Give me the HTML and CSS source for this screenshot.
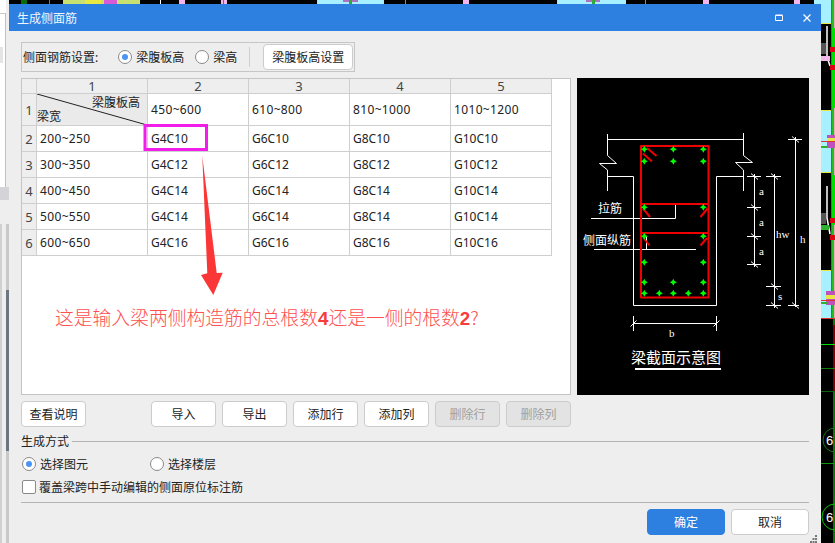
FILE: index.html
```html
<!DOCTYPE html>
<html lang="zh-CN">
<head>
<meta charset="utf-8">
<title>生成侧面筋</title>
<link rel="stylesheet" href="styles.css">
</head>
<body>
<svg class="cad-bg" viewBox="0 0 835 543" aria-hidden="true">
  <rect x="9" width="826" height="543" fill="#000"/>
  <rect x="63" width="77" height="4" fill="#c8e070"/>
  <rect x="85" width="16" height="4" fill="#e8e840"/>
  <rect x="104" width="13" height="4" fill="#d85ad8"/>
  <rect x="21" width="6" height="4" fill="#0a6a0a"/>
  <rect x="49" width="1" height="4" fill="#0c0"/>
  <rect x="160" width="1" height="4" fill="#fff"/>
  <rect x="179" width="6" height="4" fill="#f6b4ee"/>
  <rect x="221" width="6" height="4" fill="#f6b4ee"/>
  <rect x="223" width="1" height="4" fill="#c44"/>
  <rect x="318" width="66" height="4" fill="#a6f0ff"/>
  <rect x="317" width="1" height="4" fill="#e8e840"/>
  <rect x="383" width="1" height="4" fill="#e8e840"/>
  <rect x="343" width="15" height="2" fill="#b070c0"/>
  <rect x="349" width="3" height="4" fill="#3a3"/>
  <rect x="405" width="1" height="4" fill="#0e0"/>
  <rect x="463" width="6" height="4" fill="#f6b4ee"/>
  <rect x="558" width="68" height="4" fill="#a6f0ff"/>
  <rect x="557" width="1" height="4" fill="#e8e840"/>
  <rect x="625" width="1" height="4" fill="#e8e840"/>
  <rect x="586" width="14" height="2" fill="#b070c0"/>
  <rect x="592" width="3" height="4" fill="#3a3"/>
  <rect x="645" width="1" height="4" fill="#0e0"/>
  <rect x="703" width="6" height="4" fill="#f6b4ee"/>
  <rect x="794" width="6" height="4" fill="#f6b4ee"/>
  <rect x="814" width="21" height="4" fill="#a6f0ff"/>

  <rect x="821" width="14" height="23" fill="#a6f0ff"/>
  <rect x="821" y="111" width="14" height="61" fill="#a6f0ff"/>
  <rect x="821" y="271" width="14" height="47" fill="#a6f0ff"/>
  <rect x="821" y="23" width="14" height="1" fill="#e8e840"/>
  <rect x="821" y="110" width="14" height="1" fill="#e8e840"/>
  <rect x="821" y="172" width="14" height="1" fill="#e8e840"/>
  <rect x="821" y="270" width="14" height="1" fill="#e8e840"/>
  <rect x="821" y="318" width="14" height="1" fill="#e03030"/>
  <rect x="831" width="1" height="318" fill="#1a9a1a"/>
  <rect x="832" y="0" width="2" height="318" fill="#20c020"/>
  <rect x="834" y="0" width="1" height="318" fill="#e8b0c0"/>
  <rect x="832" y="28" width="3" height="80" fill="#00e000"/>
  <rect x="832" y="175" width="3" height="50" fill="#00e000"/>
  <path d="M827 26V57L830 66M827 186V218L830 234" stroke="#fff" fill="none" stroke-width="1.5"/>
  <rect x="830" y="47" width="5" height="5" fill="#e00010"/>
  <rect x="830" y="65" width="5" height="5" fill="#e00010"/>
  <rect x="830" y="218" width="5" height="5" fill="#e00010"/>
  <rect x="830" y="235" width="5" height="5" fill="#e00010"/>
  <rect x="821" y="56" width="9" height="5" fill="#f0b8ea"/>
  <rect x="821" y="225" width="8" height="5" fill="#30b030"/>
  <rect x="821" y="43" width="5" height="11" fill="#555"/>
  <rect x="821" y="213" width="5" height="11" fill="#555"/>
  <rect x="827" y="135" width="8" height="13" fill="#c050c0"/>
  <rect x="826" y="291" width="9" height="14" fill="#c050c0"/>
  <rect x="827" y="138" width="8" height="3" fill="#e8e840"/>
  <rect x="826" y="295" width="9" height="4" fill="#e8e840"/>
  <rect x="821" y="141" width="14" height="1" fill="#e03030"/>
  <rect x="821" y="300" width="14" height="1" fill="#e03030"/>
  <rect x="821" y="146" width="6" height="2" fill="#30b030"/>
  <rect x="821" y="302" width="6" height="2" fill="#30b030"/>

  <rect x="833" y="319" width="2" height="224" fill="#087808"/>
  <rect x="833" y="325" width="2" height="66" fill="#800000"/>
  <rect x="821" y="344" width="14" height="1" fill="#00e000"/>
  <rect x="821" y="368" width="14" height="1" fill="#0a800a"/>
  <rect x="821" y="391" width="14" height="1" fill="#0a600a"/>
  <rect x="821" y="463" width="14" height="1" fill="#0a9a0a"/>
  <circle cx="835" cy="440" r="12" fill="none" stroke="#0a800a"/>
  <circle cx="835" cy="517" r="13" fill="none" stroke="#00c000"/>
  <text x="826" y="445" class="cad-num">6</text>
  <text x="826" y="522" class="cad-num">6</text>

  <rect width="9" height="543" fill="#eee"/>
  <rect width="6" height="187" fill="#fff"/>
  <rect y="13" width="6" height="1" fill="#c8c8c8"/>
  <rect y="47" x="0" width="3" height="16" fill="#e4e4e4"/>
  <rect x="5" y="13" width="1" height="174" fill="#c0c0c0"/>
  <rect y="187" width="9" height="13" fill="#d4d4d8"/>
  <rect y="224" width="2" height="319" fill="#d0d0d0"/>
  <rect x="6" y="224" width="3" height="319" fill="#c8c8c8"/>
  <rect x="6" y="290" width="3" height="161" fill="#6b7680"/>
</svg>

<section class="dialog">
  <header class="titlebar">
    <span class="title">生成侧面筋</span>
    <span class="win-controls">
      <svg class="win-icon" viewBox="0 0 8 8" aria-hidden="true"><path d="M.5 1.5h7v5h-7zM.5 1h7" fill="none" stroke="#fff"/></svg>
      <svg class="win-icon" viewBox="0 0 8 8" aria-hidden="true"><path d="M.5.5l7 7M7.5.5l-7 7" fill="none" stroke="#fff" stroke-width="1.2"/></svg>
    </span>
  </header>

  <div class="body">
    <div class="settings">
      <span class="settings-label">侧面钢筋设置:</span>
      <label class="option option-web"><span class="radio radio-on"></span>梁腹板高</label>
      <label class="option"><span class="radio"></span>梁高</label>
      <span class="separator"></span>
      <button class="btn btn-setting">梁腹板高设置</button>
    </div>

    <div class="main">
      <div class="panel">
        <div class="grid">
          <div class="cell head"></div>
          <div class="cell head">1</div>
          <div class="cell head">2</div>
          <div class="cell head">3</div>
          <div class="cell head">4</div>
          <div class="cell head">5</div>

          <div class="cell head">1</div>
          <div class="cell corner">
            <svg class="corner-line" viewBox="0 0 110 31" preserveAspectRatio="none" aria-hidden="true"><path d="M0 0L110 31" stroke="#222" fill="none"/></svg>
            <span class="corner-top">梁腹板高</span>
            <span class="corner-bottom">梁宽</span>
          </div>
          <div class="cell range">450~600</div>
          <div class="cell range">610~800</div>
          <div class="cell range">810~1000</div>
          <div class="cell range">1010~1200</div>

          <div class="cell head">2</div>
          <div class="cell range">200~250</div>
          <div class="cell">G4C10</div>
          <div class="cell">G6C10</div>
          <div class="cell">G8C10</div>
          <div class="cell">G10C10</div>

          <div class="cell head">3</div>
          <div class="cell range">300~350</div>
          <div class="cell">G4C12</div>
          <div class="cell">G6C12</div>
          <div class="cell">G8C12</div>
          <div class="cell">G10C12</div>

          <div class="cell head">4</div>
          <div class="cell range">400~450</div>
          <div class="cell">G4C14</div>
          <div class="cell">G6C14</div>
          <div class="cell">G8C14</div>
          <div class="cell">G10C14</div>

          <div class="cell head">5</div>
          <div class="cell range">500~550</div>
          <div class="cell">G4C14</div>
          <div class="cell">G6C14</div>
          <div class="cell">G8C14</div>
          <div class="cell">G10C14</div>

          <div class="cell head">6</div>
          <div class="cell range">600~650</div>
          <div class="cell">G4C16</div>
          <div class="cell">G6C16</div>
          <div class="cell">G8C16</div>
          <div class="cell">G10C16</div>
        </div>
        <svg class="markup" viewBox="22 79 548 315" aria-hidden="true">
          <rect x="145" y="125.500" width="61.500" height="24" fill="none" stroke="#f01ee8" stroke-width="3"/>
          <path d="M202.300 156L207.300 273.300 201 275 213.300 295 222.700 272.700 216.700 273Z" fill="#fb3636"/>
        </svg>
        <p class="question">这是输入梁两侧构造筋的总根数<b>4</b>还是一侧的根数<b>2</b>?</p>
      </div>

      <svg class="section" viewBox="577 78 232 317" role="img" aria-label="梁截面示意图">
        <defs>
          <path id="dot" d="M0-3.500L1.200-1.200 3.500 0 1.200 1.200 0 3.500-1.200 1.200-3.500 0-1.200-1.200Z" fill="#0f0"/>
        </defs>
        <rect x="577" y="78" width="232" height="317" fill="#000"/>
        <g fill="none" stroke="#fff" stroke-width="1">
          <path d="M607.500 139.500H743.500"/>
          <path d="M607.500 134V155.500L616.500 163.500H599.500L607.500 170V191"/>
          <path d="M743.500 133V155.500L752.500 162.500H735.500L743.500 170V191"/>
          <path d="M607.500 176.500H633.500V305.500H716.500V176.500H743.500"/>
          <path d="M591 218.500H675.500V204"/>
          <path d="M594 249.500H696M646.500 237V249.500"/>
          <path d="M754.500 174V267M747 176.500H761M747 207.500H761M747 236.500H761M747 264.500H761"/>
          <path d="M751 173.500L758 179.500M751 204.500L758 210.500M751 233.500L758 239.500M751 261.500L758 267.500"/>
          <path d="M774.500 174V308M766 176.500H781M766 286.500H781M766 305.500H781"/>
          <path d="M771 173.500L778 179.500M771 283.500L778 289.500M771 302.500L778 308.500"/>
          <path d="M795.500 137V307M788 139.500H802M788 305.500H799"/>
          <path d="M792 136.500L799 142.500M792 302.500L799 308.500"/>
          <path d="M633.500 316V331M716.500 316V331M633.500 323.500H716.500"/>
          <path d="M630.500 326.500L636.500 320.500M713.500 326.500L719.500 320.500"/>
        </g>
        <path d="M635 369H721" stroke="#fff" stroke-width="2"/>
        <g fill="none" stroke="#f00000" stroke-width="2" stroke-linejoin="round">
          <path d="M641 146H708.500V297.500H641Z"/>
          <path d="M641 204H708.500M641 233H708.500"/>
          <path d="M647 148L656.500 156M643 153.500L652 161.500M643 208.500L650 217M707.500 208.500L700.500 217M643.500 238L649.500 245.500M707 238L700.500 245.500"/>
        </g>
        <use href="#dot" x="644.300" y="149.300"/>
        <use href="#dot" x="673.300" y="149.300"/>
        <use href="#dot" x="703.300" y="149.300"/>
        <use href="#dot" x="644.300" y="161.300"/>
        <use href="#dot" x="673.300" y="161.300"/>
        <use href="#dot" x="703.300" y="161.300"/>
        <use href="#dot" x="644.300" y="207.300"/>
        <use href="#dot" x="703.300" y="207.300"/>
        <use href="#dot" x="644.300" y="236.300"/>
        <use href="#dot" x="703.300" y="236.300"/>
        <use href="#dot" x="644.300" y="262.300"/>
        <use href="#dot" x="703.300" y="262.300"/>
        <use href="#dot" x="644.300" y="282.300"/>
        <use href="#dot" x="673.300" y="282.300"/>
        <use href="#dot" x="703.300" y="282.300"/>
        <use href="#dot" x="644.300" y="293.300"/>
        <use href="#dot" x="659.300" y="293.300"/>
        <use href="#dot" x="673.300" y="293.300"/>
        <use href="#dot" x="688.300" y="293.300"/>
        <use href="#dot" x="703.300" y="293.300"/>
        <text x="598" y="213" class="cad-cn">拉筋</text>
        <text x="583" y="244.500" class="cad-cn">侧面纵筋</text>
        <text x="631" y="363" class="cad-title">梁截面示意图</text>
        <text x="759" y="195" class="cad-dim">a</text>
        <text x="759" y="226" class="cad-dim">a</text>
        <text x="759" y="255" class="cad-dim">a</text>
        <text x="776" y="238" class="cad-dim">hw</text>
        <text x="800" y="243" class="cad-dim">h</text>
        <text x="778" y="300" class="cad-dim">s</text>
        <text x="669" y="337" class="cad-dim">b</text>
      </svg>
    </div>

    <div class="actions">
      <button class="btn btn-help">查看说明</button>
      <button class="btn">导入</button>
      <button class="btn">导出</button>
      <button class="btn">添加行</button>
      <button class="btn">添加列</button>
      <button class="btn btn-disabled">删除行</button>
      <button class="btn btn-disabled">删除列</button>
    </div>

    <div class="legend"><span>生成方式</span><span class="legend-line"></span></div>
    <div class="modes">
      <label class="option mode-first"><span class="radio radio-on"></span>选择图元</label>
      <label class="option"><span class="radio"></span>选择楼层</label>
    </div>
    <label class="check-row"><span class="checkbox"></span>覆盖梁跨中手动编辑的侧面原位标注筋</label>
    <div class="rule"></div>
    <div class="footer">
      <button class="btn btn-wide btn-primary">确定</button>
      <button class="btn btn-wide">取消</button>
    </div>
  </div>
  <svg class="grip" viewBox="0 0 8 8" aria-hidden="true"><path d="M5 0h2v2H5zM2.500 3h2v2h-2zM5 3h2v2H5zM0 6h2v2H0zM2.500 6h2v2h-2zM5 6h2v2H5z" fill="#777"/></svg>
</section>
</body>
</html>
```

FILE: styles.css
```css
* { box-sizing: border-box; }

html, body {
  margin: 0;
  padding: 0;
  width: 835px;
  height: 543px;
  overflow: hidden;
  background: #000;
}

body {
  position: relative;
  font-family: "Noto Sans", "Noto Sans CJK SC", sans-serif;
  font-size: 12px;
  color: #222;
}

.cad-bg {
  position: absolute;
  left: 0;
  top: 0;
  width: 835px;
  height: 543px;
}

.cad-num {
  fill: #fff;
  font: 13px "Liberation Sans", sans-serif;
}

.dialog {
  position: absolute;
  left: 9px;
  top: 4px;
  width: 812px;
  height: 539px;
  background: #eee;
}

.titlebar {
  display: flex;
  align-items: center;
  justify-content: space-between;
  height: 27px;
  padding: 0 10px 0 8px;
  background: #2d7fe0;
  color: #f0f6ff;
}

.win-controls {
  display: flex;
  gap: 20px;
}

.win-icon {
  display: block;
  width: 8px;
  height: 8px;
}

.body {
  display: flex;
  flex-direction: column;
  padding: 11px 12px 0;
}

.settings {
  display: flex;
  align-items: center;
  width: 334px;
  height: 30px;
  padding-left: 1px;
  border: 1px solid #c6c6c6;
}

.settings-label { margin-right: 20px; }

.option {
  display: flex;
  align-items: center;
  gap: 4px;
}

.option-web { margin-right: 11px; }

.radio {
  position: relative;
  flex: none;
  width: 14px;
  height: 14px;
  border: 1px solid #8a8a8a;
  border-radius: 50%;
  background: #fff;
}

.radio-on::after {
  content: "";
  position: absolute;
  left: 3px;
  top: 3px;
  width: 6px;
  height: 6px;
  border-radius: 50%;
  background: #4a94f4;
}

.separator {
  width: 1px;
  height: 20px;
  margin: 0 13px 0 12px;
  background: #cfcfcf;
}

.btn {
  flex: none;
  width: 65px;
  height: 26px;
  padding: 0;
  border: 1px solid #ccc;
  border-radius: 4px;
  background: #fff;
  color: #222;
  font: inherit;
}

.btn-setting { width: 90px; }
.btn-help { margin-right: 59px; }
.btn-disabled { background: #e3e3e3; color: #a0a0a0; }
.btn-wide { width: 78px; }
.btn-primary { background: #2d7fe0; border-color: #2d7fe0; color: #fff; }

.main {
  display: flex;
  gap: 6px;
  height: 317px;
  margin-top: 6px;
}

.panel {
  position: relative;
  width: 550px;
  border: 1px solid #c4c4c4;
  background: #fff;
}

.grid {
  display: grid;
  grid-template-columns: 15px 111px 101px 101px 101px 101px;
  grid-template-rows: 15px 32px repeat(5, 26px);
  width: 530px;
}

.cell {
  display: flex;
  align-items: center;
  padding-left: 3px;
  border-right: 1px solid #cfcfcf;
  border-bottom: 1px solid #cfcfcf;
  color: #222;
  white-space: nowrap;
}

.range { letter-spacing: 0.35px; }

.head {
  justify-content: center;
  padding: 0;
  background: #eee;
  color: #444;
  font-size: 13px;
}

.corner {
  position: relative;
  display: block;
  padding: 0;
  background: #eaeaea;
}

.corner-line {
  position: absolute;
  left: 0;
  top: 0;
  width: 110px;
  height: 31px;
}

.corner-top {
  position: absolute;
  right: 7px;
  top: 0;
  line-height: 18px;
}

.corner-bottom {
  position: absolute;
  left: 0;
  bottom: 0;
  line-height: 17px;
}

.markup {
  position: absolute;
  left: 0;
  top: 0;
  width: 548px;
  height: 315px;
  pointer-events: none;
}

.question {
  position: absolute;
  left: 33px;
  top: 223px;
  margin: 0;
  color: #ff5050;
  font-family: "Noto Sans CJK SC", sans-serif;
  font-size: 18.8px;
  font-weight: 300;
  line-height: 30px;
  white-space: nowrap;
}

.question b {
  font-family: "Liberation Sans", sans-serif;
  font-weight: 700;
  color: #f83c3c;
}

.section {
  display: block;
  width: 232px;
  height: 317px;
}

.cad-cn {
  fill: #fff;
  font: 12px "Noto Sans CJK SC", sans-serif;
}

.cad-title {
  fill: #fff;
  font: 15px "Noto Sans CJK SC", sans-serif;
}

.cad-dim {
  fill: #fff;
  font: 11px "Liberation Serif", serif;
}

.actions {
  display: flex;
  gap: 6px;
  margin-top: 6px;
}

.legend {
  display: flex;
  align-items: center;
  gap: 3px;
  height: 18px;
  margin-top: 5px;
}

.legend-line {
  flex: 1;
  height: 1px;
  background: #b4b4b4;
}

.modes {
  display: flex;
  align-items: center;
  height: 18px;
  margin-top: 5px;
  padding-left: 1px;
}

.mode-first { width: 128px; }

.check-row {
  display: flex;
  align-items: center;
  gap: 3px;
  height: 16px;
  margin-top: 6px;
  padding-left: 1px;
}

.checkbox {
  flex: none;
  width: 14px;
  height: 14px;
  border: 1px solid #8a8a8a;
  border-radius: 2px;
  background: #fff;
}

.rule {
  height: 1px;
  margin-top: 7px;
  background: #b4b4b4;
}

.footer {
  display: flex;
  justify-content: flex-end;
  gap: 6px;
  margin-top: 6px;
}

.grip {
  position: absolute;
  right: 3px;
  bottom: 0;
  width: 8px;
  height: 8px;
}
```
